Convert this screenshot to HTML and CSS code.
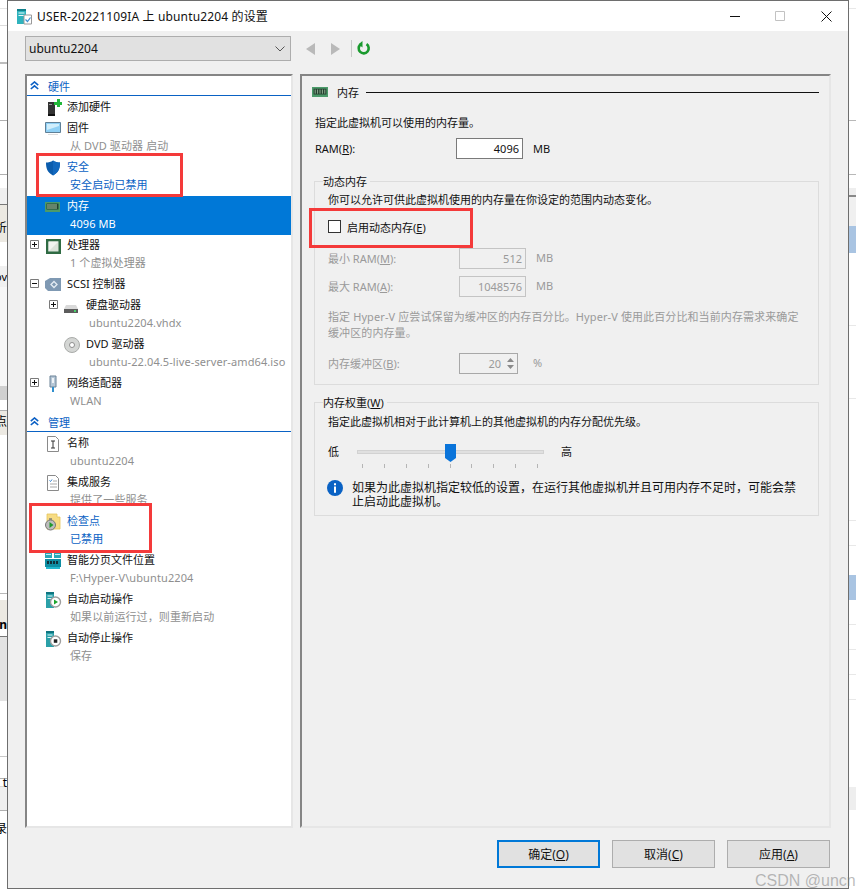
FILE: index.html
```html
<!DOCTYPE html>
<html lang="zh-CN">
<head>
<meta charset="utf-8">
<title>USER-20221109IA 上 ubuntu2204 的设置</title>
<link rel="stylesheet" href="styles.css">
</head>
<body>
<div class="strip strip-left">
  <span class="glyph g1">析</span>
  <span class="glyph g2">ov</span>
  <span class="glyph g3">点</span>
  <span class="glyph g4">n</span>
  <span class="glyph g5">t</span>
  <span class="glyph g6">录</span>
</div>

<main class="window">
  <header class="titlebar">
    <svg class="title-icon" width="18" height="18" viewBox="0 0 18 18"><path d="M1 2h9v15H1z" fill="#2fb3bd"/><path d="M1 2h9v2H1z" fill="#11808c"/><path d="M2.500 5.500h6v1h-6zM2.500 8h6v1h-6z" fill="#e8fbfd"/><path d="M8 8h7.500v9H8z" fill="#fff" stroke="#9a9a9a"/><path d="M9.500 12.500l2 2 3-4" fill="none" stroke="#3d8fd1" stroke-width="1.200"/></svg>
    <span class="title-text">USER-20221109IA 上 ubuntu2204 的设置</span>
    <div class="winbtns">
      <svg class="wb-min" width="10" height="10" viewBox="0 0 10 10"><path d="M0 5.500h10" stroke="#111"/></svg>
      <svg class="wb-max" width="10" height="10" viewBox="0 0 10 10"><path d="M.5.500h9v9h-9z" fill="none" stroke="#c2c2c2"/></svg>
      <svg class="wb-close" width="11" height="11" viewBox="0 0 11 11"><path d="M.5.500l10 10M10.500.500l-10 10" stroke="#111" fill="none"/></svg>
    </div>
  </header>

  <div class="client">
    <div class="toolbar">
      <div class="combo"><span>ubuntu2204</span><svg width="10" height="6" viewBox="0 0 10 6"><path d="M.5.500L5 5 9.500.500" fill="none" stroke="#555"/></svg></div>
      <div class="tools">
        <svg width="10" height="12" viewBox="0 0 10 12"><path d="M9 0v12L0 6z" fill="#b9b9b9"/></svg>
        <svg class="tool-next" width="10" height="12" viewBox="0 0 10 12"><path d="M1 0v12l9-6z" fill="#b9b9b9"/></svg>
        <span class="tool-sep"></span>
        <svg width="14" height="15" viewBox="0 0 14 15"><path d="M9.500 3.200A5 5 0 1 1 3.500 3.500" fill="none" stroke="#1a9a2e" stroke-width="2.600"/><path d="M5.500 0v6.500L1.500 3.200z" fill="#1a9a2e"/></svg>
      </div>
    </div>

    <div class="panes">
      <nav class="tree">
        <div class="section"><svg width="9" height="9" viewBox="0 0 9 9"><path d="M.8 4.200L4.500 1l3.700 3.200M.8 8L4.500 4.800 8.200 8" fill="none" stroke="#0a5fc4" stroke-width="1.600"/></svg><span>硬件</span></div>

        <div class="row single"><span class="exp"></span><svg class="ico" width="20" height="20" viewBox="0 0 20 20"><path d="M3 5h7v12H3z" fill="#333"/><path d="M4 7h3v1H4z" fill="#999"/><path d="M3 17h7v2H3z" fill="#111"/><path d="M9 5h3V2h3v3h2v3h-2v2h-3V8H9z" fill="#22b83a"/></svg><div class="txt"><div class="t">添加硬件</div></div></div>

        <div class="row"><span class="exp"></span><svg class="ico" width="20" height="20" viewBox="0 0 20 20"><path d="M.5 4.500h15v10H.5z" fill="#8fd0f5" stroke="#5f7f96"/><path d="M2 6h12v2L2 12z" fill="#d0eefc"/><path d="M3 16.500h10" stroke="#ddd"/></svg><div class="txt"><div class="t">固件</div><div class="s">从 DVD 驱动器 启动</div></div></div>

        <div class="row"><span class="exp"></span><svg class="ico" width="20" height="20" viewBox="0 0 20 20"><path d="M8 3.500c2 1.500 4.500 2 7 2 0 6-1.500 10-7 13-5.500-3-7-7-7-13 2.500 0 5-.5 7-2z" fill="#0b5cad"/><path d="M8 3.500c2 1.500 4.500 2 7 2 0 6-1.500 10-7 13z" fill="#1268be"/></svg><div class="txt"><div class="t link">安全</div><div class="s link">安全启动已禁用</div></div></div>

        <div class="row selected"><span class="exp"></span><svg class="ico" width="20" height="20" viewBox="0 0 20 20"><use href="#ram"/></svg><div class="txt"><div class="t">内存</div><div class="s">4096 MB</div></div></div>

        <div class="row"><span class="exp"><svg width="9" height="9" viewBox="0 0 9 9"><use href="#plus"/></svg></span><svg class="ico" width="20" height="20" viewBox="0 0 20 20"><path d="M1 4h15v15H1z" fill="#2f6b43"/><path d="M3.500 6.500h10v10h-10z" fill="#dbe3da"/><path d="M3.500 6.500h10l-10 10z" fill="#f1f4f0"/></svg><div class="txt"><div class="t">处理器</div><div class="s">1 个虚拟处理器</div></div></div>

        <div class="row single"><span class="exp"><svg width="9" height="9" viewBox="0 0 9 9"><use href="#minus"/></svg></span><svg class="ico" width="20" height="20" viewBox="0 0 20 20"><path d="M0 7l5-3h11v13H3L0 14z" fill="#7f99b3"/><path d="M6 10.500l3-3 3 3-3 3z" fill="none" stroke="#e4ecf3" stroke-width="1.300"/></svg><div class="txt"><div class="t">SCSI 控制器</div></div></div>

        <div class="row nested"><span class="exp"><svg width="9" height="9" viewBox="0 0 9 9"><use href="#plus"/></svg></span><svg class="ico" width="20" height="20" viewBox="0 0 20 20"><path d="M2 10h10l2 4H0z" fill="#d9d9d9"/><path d="M0 14h14v4H0z" fill="#5c5c5c"/><path d="M10 15h2v2h-2z" fill="#48d26a"/></svg><div class="txt"><div class="t">硬盘驱动器</div><div class="s">ubuntu2204.vhdx</div></div></div>

        <div class="row nested"><span class="exp"></span><svg class="ico" width="20" height="20" viewBox="0 0 20 20"><circle cx="8" cy="11" r="7.500" fill="#d4d6d4" stroke="#a9aba9"/><circle cx="8" cy="11" r="2.500" fill="#fff" stroke="#8e8e8e"/></svg><div class="txt"><div class="t">DVD 驱动器</div><div class="s">ubuntu-22.04.5-live-server-amd64.iso</div></div></div>

        <div class="row"><span class="exp"><svg width="9" height="9" viewBox="0 0 9 9"><use href="#plus"/></svg></span><svg class="ico" width="20" height="20" viewBox="0 0 20 20"><path d="M5 3h6v11H5z" fill="#b6c7d6" stroke="#6b8297"/><path d="M7 5h2v5H7z" fill="#eef3f7"/><path d="M7 14h2v5H7z" fill="#2f8fce"/></svg><div class="txt"><div class="t">网络适配器</div><div class="s">WLAN</div></div></div>

        <div class="section"><svg width="9" height="9" viewBox="0 0 9 9"><path d="M.8 4.200L4.500 1l3.700 3.200M.8 8L4.500 4.800 8.200 8" fill="none" stroke="#0a5fc4" stroke-width="1.600"/></svg><span>管理</span></div>

        <div class="row"><span class="exp"></span><svg class="ico" width="20" height="20" viewBox="0 0 20 20"><path d="M2.500 3.500h8l3 3v12h-11z" fill="#fff" stroke="#8a8a8a"/><path d="M6 8h4M6 15h4M8 8v7" stroke="#333" fill="none"/></svg><div class="txt"><div class="t">名称</div><div class="s">ubuntu2204</div></div></div>

        <div class="row"><span class="exp"></span><svg class="ico" width="20" height="20" viewBox="0 0 20 20"><path d="M2.500 3.500h8l3 3v12h-11z" fill="#fff" stroke="#8a8a8a"/><path d="M4.500 8.500l1 1 1.500-2" stroke="#2f7fd0" fill="none"/><path d="M8 9h4M5 12h7M5 15h7" stroke="#a8a8a8"/></svg><div class="txt"><div class="t">集成服务</div><div class="s">提供了一些服务</div></div></div>

        <div class="row"><span class="exp"></span><svg class="ico" width="20" height="20" viewBox="0 0 20 20"><path d="M2 3h10v3h3v12H2z" fill="#f7dc84" stroke="#e6c45a" stroke-width=".8"/><circle cx="5.500" cy="14" r="5" fill="#bdbdbd" stroke="#777"/><path d="M4.500 11l4 3-4 3z" fill="#1e9a2a"/><path d="M4 8h3" stroke="#777" stroke-width="1.400"/></svg><div class="txt"><div class="t link">检查点</div><div class="s link">已禁用</div></div></div>

        <div class="row"><span class="exp"></span><svg class="ico" width="20" height="20" viewBox="0 0 20 20"><path d="M0 3h7v5H0zM9 3h7v5H9z" fill="#2aa8b8"/><path d="M1 4h5v1H1zM10 4h5v1h-5z" fill="#bff0f5"/><path d="M0 9h16v8H0z" fill="#0f8ea3"/><path d="M2 11h2v3H2zM5 11h2v3H5zM8 11h2v3H8zM11 11h2v3h-2z" fill="#12303a"/><path d="M1 17h14v2H1z" fill="#22b8cf"/></svg><div class="txt"><div class="t">智能分页文件位置</div><div class="s">F:\Hyper-V\ubuntu2204</div></div></div>

        <div class="row"><span class="exp"></span><svg class="ico" width="20" height="20" viewBox="0 0 20 20"><use href="#srv"/><circle cx="10.500" cy="13" r="5" fill="#fff" stroke="#9e9e9e" stroke-width="1.400"/><path d="M9 10.500l4 2.500-4 2.500z" fill="#1fa52d"/></svg><div class="txt"><div class="t">自动启动操作</div><div class="s">如果以前运行过，则重新启动</div></div></div>

        <div class="row"><span class="exp"></span><svg class="ico" width="20" height="20" viewBox="0 0 20 20"><use href="#srv"/><circle cx="10.500" cy="13" r="5" fill="#fff" stroke="#9e9e9e" stroke-width="1.400"/><path d="M8.800 11.300h3.500v3.500H8.800z" fill="#222"/></svg><div class="txt"><div class="t">自动停止操作</div><div class="s">保存</div></div></div>
      </nav>

      <section class="detail">
        <div class="detail-head">
          <svg width="16" height="10" viewBox="0 0 20 12" preserveAspectRatio="none"><use href="#ramflat"/></svg>
          <span class="head-text">内存</span>
          <span class="head-line"></span>
        </div>
        <p class="lead">指定此虚拟机可以使用的内存量。</p>
        <div class="ram-row">
          <label class="ram-label">RAM(<u>R</u>):</label>
          <div class="input active">4096</div>
          <span class="unit">MB</span>
        </div>

        <div class="group g-dyn">
          <div class="legend">动态内存</div>
          <p class="desc">你可以允许可供此虚拟机使用的内存量在你设定的范围内动态变化。</p>
          <div class="check-row"><span class="checkbox"></span><span>启用动态内存(<u>E</u>)</span></div>
          <div class="field f-min dis"><label>最小 RAM(<u>M</u>):</label><div class="input">512</div><span class="unit">MB</span></div>
          <div class="field f-max dis"><label>最大 RAM(<u>A</u>):</label><div class="input">1048576</div><span class="unit">MB</span></div>
          <p class="note dis">指定 Hyper-V 应尝试保留为缓冲区的内存百分比。Hyper-V 使用此百分比和当前内存需求来确定缓冲区的内存量。</p>
          <div class="field f-buf dis"><label>内存缓冲区(<u>B</u>):</label>
            <div class="input spin"><span class="spin-val">20</span><span class="spin-btns"><svg width="7" height="4" viewBox="0 0 7 4"><path d="M3.500 0L7 4H0z" fill="#8a8a8a"/></svg><svg width="7" height="4" viewBox="0 0 7 4"><path d="M3.500 4L7 0H0z" fill="#8a8a8a"/></svg></span></div>
            <span class="unit pct">%</span></div>
        </div>

        <div class="group g-weight">
          <div class="legend">内存权重(<u>W</u>)</div>
          <p class="desc d2">指定此虚拟机相对于此计算机上的其他虚拟机的内存分配优先级。</p>
          <div class="slider-row">
            <span class="low">低</span>
            <div class="slider">
              <div class="track"></div>
              <svg class="thumb" width="11" height="18" viewBox="0 0 11 18"><path d="M0 0h11v14l-5.500 4L0 14z" fill="#0a74da"/></svg>
              <div class="ticks"><i></i><i></i><i></i><i></i><i></i><i></i><i></i><i></i><i></i></div>
            </div>
            <span class="high">高</span>
          </div>
          <div class="info">
            <svg width="16" height="16" viewBox="0 0 16 16"><circle cx="8" cy="8" r="8" fill="#0a62c4"/><path d="M7 3.200h2v2H7zM7 6.500h2v6.300H7z" fill="#fff"/></svg>
            <p>如果为此虚拟机指定较低的设置，在运行其他虚拟机并且可用内存不足时，可能会禁止启动此虚拟机。</p>
          </div>
        </div>
      </section>
    </div>

    <footer class="actions">
      <button class="btn primary">确定(<u>O</u>)</button>
      <button class="btn">取消(<u>C</u>)</button>
      <button class="btn">应用(<u>A</u>)</button>
    </footer>
  </div>
</main>

<div class="strip strip-right"></div>

<div class="redbox rb1"></div>
<div class="redbox rb2"></div>
<div class="redbox rb3"></div>
<div class="watermark">CSDN @uncn</div>

<svg class="defs" width="0" height="0">
  <defs>
    <g id="plus"><path d="M.5.500h8v8h-8z" fill="#fff" stroke="#7a7a7a"/><path d="M2 4.500h5M4.500 2v5" stroke="#111"/></g>
    <g id="minus"><path d="M.5.500h8v8h-8z" fill="#fff" stroke="#7a7a7a"/><path d="M2 4.500h5" stroke="#111"/></g>
    <g id="ram"><path d="M0 6h15v10H0z" fill="#4c9a6a"/><path d="M1.500 7.500h12v6h-12z" fill="#23402f"/><path d="M3 8v5M5 8v5M7 8v5M9 8v5M11 8v5" stroke="#a8c8a8"/></g>
    <g id="ramflat"><path d="M0 0h20v12H0z" fill="#4c9a6a"/><path d="M2 2h16v7H2z" fill="#23402f"/><path d="M4 3v5M7 3v5M10 3v5M13 3v5M16 3v5" stroke="#a8c8a8"/></g>
    <g id="srv"><path d="M1 3h8v16H1z" fill="#2aa0a8"/><path d="M1 3h8v2H1z" fill="#0f7480"/><path d="M2.500 6.500h5v1h-5zM2.500 9h5v1h-5z" fill="#dff7f9"/></g>
  </defs>
</svg>
</body>
</html>
```

FILE: styles.css
```css
* { box-sizing: border-box; }
html, body { margin: 0; padding: 0; }
body {
  position: relative;
  width: 856px;
  height: 896px;
  overflow: hidden;
  display: flex;
  align-items: flex-start;
  background: #fff;
  font-family: "Noto Sans", "Noto Sans CJK SC", sans-serif;
  font-size: 11px;
  color: #111;
}
p { margin: 0; }

/* background window slivers */
.strip { width: 7px; height: 896px; flex: none; overflow: hidden; }
.strip-left {
  display: flex;
  flex-direction: column;
  align-items: flex-end;
  background: linear-gradient(#fff 0 8px, #e6e6e6 8px 9px, #fff 9px 25px, #dcdcdc 25px 26px, #fff 26px 62px, #bdbdbd 62px 64px, #fff 64px 120px, #b0b0b0 120px 121px, #fff 121px 174px, #b0b0b0 174px 175px, #fff 175px 188px, #f0f0f0 188px 204px, #777 204px 205px, #ece9e2 205px 242px, #fff 242px 266px, #f0f0f0 266px 287px, #f7f7f7 287px 386px, #d0d0d0 386px 400px, #fff 400px 410px, #b0b0b0 410px 411px, #ece9e2 411px 435px, #fff 435px 593px, #b8b8b8 593px 594px, #fff 594px 600px, #ece9e2 600px 628px, #fff 628px 636px, #777 636px 637px, #e3e3e3 637px 701px, #fff 701px 756px, #c8c8c8 756px 757px, #fff 757px 778px, #b0b0b0 778px 779px, #fff 779px 786px, #d8d8d8 786px 787px, #f0f0f0 787px 810px, #b0b0b0 810px 811px, #fff 811px);
}
.glyph { font-size: 12px; line-height: 16px; white-space: nowrap; color: #000; }
.g1 { margin-top: 220px; }
.g2 { margin-top: 33px; font-size: 11px; }
.g3 { margin-top: 129px; }
.g4 { margin-top: 187px; font-weight: 700; }
.g5 { margin-top: 142px; }
.g6 { margin-top: 30px; }
.strip-right {
  background: linear-gradient(#fff 0 8px, #e8e8e8 8px 9px, #fff 9px 120px, #b8b8b8 120px 121px, #fff 121px 174px, #b8b8b8 174px 175px, #fff 175px 188px, #eee 188px 195px, #888 195px 197px, #f0f0f0 197px 226px, #a9c4e2 226px 253px, #fff 253px 325px, #e8e8e8 325px 326px, #fff 326px 398px, #e8e8e8 398px 399px, #fff 399px 520px, #e8e8e8 520px 521px, #fff 521px 545px, #e8e8e8 545px 546px, #fff 546px 575px, #a9c4e2 575px 600px, #fff 600px 624px, #e8e8e8 624px 625px, #fff 625px 649px, #e8e8e8 649px 650px, #fff 650px 674px, #e8e8e8 674px 675px, #fff 675px 699px, #e8e8e8 699px 700px, #fff 700px 787px, #eee 787px 810px, #fff 810px);
}

/* dialog */
.window {
  width: 842px;
  height: 889px;
  flex: none;
  display: flex;
  flex-direction: column;
  border: 1px solid #6e6e6e;
  background: #f0f0f0;
}
.titlebar {
  height: 30px;
  flex: none;
  display: flex;
  align-items: center;
  background: #fff;
  padding-left: 8px;
}
.title-icon { margin-right: 3px; }
.title-text { font-size: 12px; color: #111; letter-spacing: .15px; }
.winbtns { margin-left: auto; display: flex; align-items: center; padding-right: 16px; }
.wb-min { margin-right: 35px; }
.wb-max { margin-right: 36px; }

.client { flex: 1; display: flex; flex-direction: column; padding: 0 17px 0 17px; }
.toolbar { height: 43px; flex: none; display: flex; align-items: flex-start; padding-top: 5px; }
.combo {
  width: 266px;
  height: 25px;
  display: flex;
  align-items: center;
  justify-content: space-between;
  padding: 0 5px 0 3px;
  background: #e1e1e1;
  border: 1px solid #adadad;
  font-size: 12px;
}
.tools { display: flex; align-items: center; height: 25px; margin-left: 15px; }
.tool-next { margin-left: 14px; }
.tool-sep { width: 1px; height: 17px; background: #c8c8c8; margin: 0 5px 0 11px; }

.panes { height: 754px; flex: none; display: flex; gap: 7px; }
.tree, .detail {
  border-style: solid;
  border-width: 2px 2px 2px 2px;
  border-color: #858585 #e6e6e6 #e6e6e6 #858585;
}
.tree { width: 268px; flex: none; background: #fff; }
.detail { flex: 1; min-width: 0; padding: 8px 10px 0 12px; background: #f0f0f0; }

/* tree */
.section {
  height: 20px;
  margin-bottom: 1px;
  display: flex;
  align-items: center;
  gap: 9px;
  padding-left: 3px;
  border-bottom: 1px solid #0a62c4;
  color: #0a62c4;
  font-size: 11px;
}
.row {
  height: 39px;
  display: grid;
  grid-template-columns: 18px 22px 1fr;
}
.row.single { height: 21px; }
.row.nested { padding-left: 19px; }
.row.selected { background: #0078d7; color: #fff; }
.row.selected .s { color: #fff; }
.exp { padding: 5px 0 0 3px; }
.exp svg { display: block; }
.ico { display: block; }
.t { height: 20px; line-height: 20px; white-space: nowrap; }
.s { height: 16px; line-height: 16px; padding-left: 3px; color: #8f8f8f; white-space: nowrap; letter-spacing: .1px; }
.t.link, .s.link { color: #0a62c4; }

/* detail */
.detail-head { height: 16px; margin-left: -2px; display: flex; align-items: center; }
.head-text { margin-left: 9px; }
.head-line { flex: 1; height: 1px; background: #111; margin-left: 7px; }
.lead { height: 16px; line-height: 16px; margin: 15px 0 7px 1px; }
.ram-row { display: flex; align-items: center; height: 21px; padding-left: 1px; }
.ram-label { width: 141px; }
.input {
  width: 67px;
  height: 21px;
  line-height: 19px;
  border: 1px solid #c4c4c4;
  background: #f0f0f0;
  text-align: right;
  padding-right: 3px;
}
.input.active { background: #fff; border-color: #7a7a7a; color: #111; }
.unit { margin-left: 10px; }
.group {
  border: 1px solid #dcdcdc;
  padding: 0 12px 0 13px;
}
.g-dyn { margin-top: 22px; height: 204px; }
.g-weight { margin-top: 17px; height: 114px; }
.legend {
  width: fit-content;
  height: 16px;
  line-height: 16px;
  margin: -8px 0 0 -5px;
  background: #f0f0f0;
  padding: 0 3px 0 0;
}
.desc { height: 16px; line-height: 16px; margin-top: 2px; white-space: nowrap; }
.desc.d2 { margin-top: 3px; }
.check-row { display: flex; align-items: center; gap: 6px; height: 13px; margin-top: 12px; }
.checkbox { width: 13px; height: 13px; background: #fff; border: 1px solid #333; }
.field { display: flex; align-items: center; height: 21px; margin-top: 7px; }
.field label { width: 131px; padding-bottom: 2px; }
.field .unit { padding-bottom: 2px; }
.f-min { margin-top: 15px; }
.f-buf { margin-top: 12px; }
.dis { color: #9a9a9a; }
.note { margin-top: 12px; line-height: 16px; width: 476px; letter-spacing: .1px; }
.input.spin {
  width: 59px;
  display: flex;
  justify-content: flex-end;
  padding-right: 0;
  border-color: #a8a8a8;
}
.spin-val { padding-right: 2px; }
.spin-btns { width: 14px; display: flex; flex-direction: column; align-items: center; justify-content: center; gap: 3px; }
.spin-btns svg { display: block; }
.pct { margin-left: 15px; }
.slider-row { display: flex; align-items: flex-start; height: 26px; margin-top: 14px; }
.low { width: 29px; line-height: 16px; }
.high { margin-left: 17px; line-height: 16px; }
.slider { position: relative; width: 187px; height: 26px; }
.track { height: 4px; margin-top: 6px; background: #e0e0e0; border: 1px solid #d2d2d2; }
.thumb { position: absolute; left: 88px; top: 0; }
.ticks { display: flex; justify-content: space-between; margin: 10px 6px 0 5px; }
.ticks i { width: 1px; height: 4px; background: #b5b5b5; }
.info { display: flex; gap: 9px; margin-top: 10px; margin-left: -1px; }
.info svg { flex: none; }
.info p { font-size: 12px; line-height: 14px; width: 450px; padding-top: 1px; }

/* footer buttons */
.actions { display: flex; justify-content: flex-end; gap: 12px; padding-top: 12px; padding-right: 1px; }
.btn {
  width: 103px;
  height: 28px;
  background: #e1e1e1;
  border: 1px solid #adadad;
  font: inherit;
  font-size: 12px;
  color: #111;
  padding: 0;
}
.btn.primary { border: 2px solid #0078d7; }

/* annotations */
.redbox { position: absolute; border: 3px solid #f43a3a; }
.rb1 { left: 36px; top: 153px; width: 147px; height: 44px; }
.rb2 { left: 29px; top: 503px; width: 123px; height: 50px; }
.rb3 { left: 309px; top: 208px; width: 164px; height: 40px; }
.watermark {
  position: absolute;
  left: 755px;
  top: 872px;
  font-family: "Liberation Sans", sans-serif;
  font-size: 16px;
  line-height: 18px;
  color: rgba(120, 120, 120, .5);
  white-space: nowrap;
}
.defs { position: absolute; }
```
